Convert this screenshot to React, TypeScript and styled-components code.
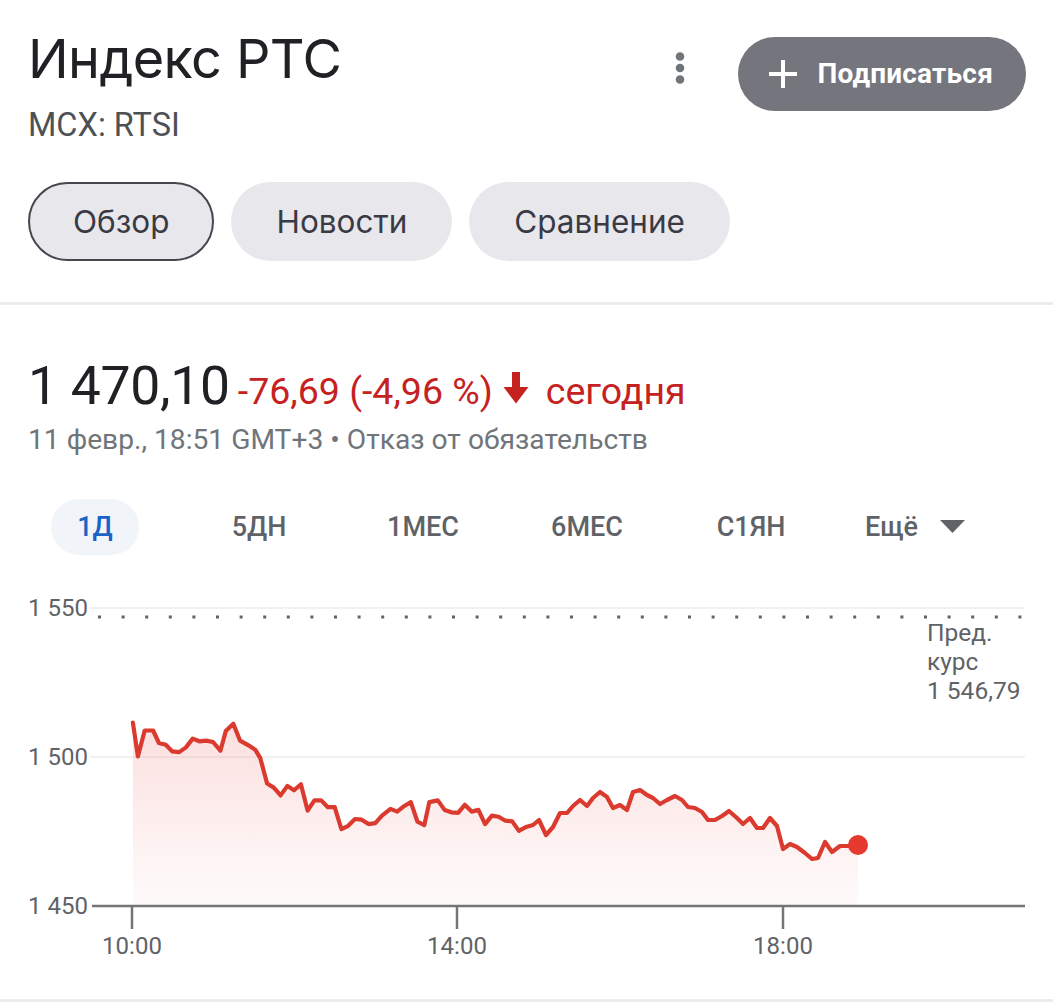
import React from "react";
import styled, { createGlobalStyle } from "styled-components";

const GlobalStyle = createGlobalStyle`
  html, body { margin: 0; padding: 0; background: #ffffff; }
  body { font-family: Roboto, "Liberation Sans", Arial, sans-serif; -webkit-font-smoothing: antialiased; }
  * { box-sizing: border-box; }
`;

const Page = styled.div`
  width: 1053px;
  background: #ffffff;
`;

const Section = styled.div`
  padding: 0 27px 0 28px;
`;

const Header = styled.div`
  display: flex;
  justify-content: space-between;
  align-items: flex-start;
  padding-top: 26.6px;
`;

const TitleBlock = styled.div`
  display: flex;
  flex-direction: column;
`;

const Title = styled.h1`
  margin: 0;
  font-family: Inter, "Noto Sans", sans-serif;
  font-weight: 400;
  font-size: 54px;
  line-height: 63px;
  color: #202124;
  letter-spacing: -0.6px;
`;

const Ticker = styled.div`
  margin-top: 15px;
  font-family: Roboto, sans-serif;
  font-size: 32.5px;
  line-height: 40px;
  color: #4d5156;
`;

const Actions = styled.div`
  display: flex;
  align-items: flex-start;
  gap: 52px;
  margin-top: 10.4px;
`;

const MoreButton = styled.div`
  width: 12px;
  height: 32px;
  margin-top: 15px;
  display: flex;
  align-items: center;
  justify-content: center;
`;

const SubscribeButton = styled.button`
  display: flex;
  align-items: center;
  gap: 19px;
  height: 74px;
  padding: 0 33px 0 30px;
  border: none;
  border-radius: 37px;
  background: #75757d;
  color: #ffffff;
  font-family: Roboto, sans-serif;
  font-weight: 700;
  font-size: 28px;
  letter-spacing: 0.2px;
`;

const ChipRow = styled.div`
  display: flex;
  gap: 17px;
  margin-top: 37px;
`;

const Chip = styled.div<{ $active?: boolean }>`
  height: 79px;
  padding: 0 ${(p) => (p.$active ? 43 : 45)}px;
  display: flex;
  align-items: center;
  border-radius: 40px;
  background: #e8e8ec;
  border: ${(p) => (p.$active ? "2px solid #46464e" : "none")};
  font-family: Inter, "Noto Sans", sans-serif;
  font-size: 31.5px;
  color: #3a3a45;
`;

const Divider = styled.div<{ $mt: number }>`
  margin-top: ${(p) => p.$mt}px;
  height: 3px;
  background: #ececee;
`;

const PriceRow = styled.div`
  display: flex;
  align-items: baseline;
  margin-top: 51px;
  height: 60px;
`;

const Price = styled.span`
  font-size: 53.5px;
  line-height: 60px;
  color: #202124;
  letter-spacing: -0.3px;
`;

const Change = styled.span<{ $ml?: number }>`
  margin-left: ${(p) => p.$ml ?? 0}px;
  font-size: 37.5px;
  color: #c5221f;
  white-space: nowrap;
`;

const ArrowIcon = styled.svg`
  flex: 0 0 auto;
  align-self: center;
  margin: 4px 17px 0 10px;
`;

const DateLine = styled.div`
  margin-top: 6px;
  font-size: 28.2px;
  line-height: 36px;
  color: #70757a;
`;

const PeriodRow = styled.div`
  display: grid;
  grid-template-columns: repeat(6, 164px);
  margin: 41px 0 0 -15px;
  height: 56px;
`;

const PeriodCell = styled.div`
  display: flex;
  align-items: center;
  justify-content: center;
`;

const PeriodTab = styled.div<{ $active?: boolean }>`
  height: 56px;
  width: ${(p) => (p.$active ? "88px" : "auto")};
  display: flex;
  align-items: center;
  justify-content: center;
  gap: 22px;
  border-radius: 28px;
  background: ${(p) => (p.$active ? "#f1f4f9" : "transparent")};
  color: ${(p) => (p.$active ? "#1a62c4" : "#5f6368")};
  font-size: 27px;
  font-weight: 500;
`;

const ChartWrap = styled.div`
  margin-top: 34px;
  height: 410px;
`;

const ChartSvg = styled.svg`
  display: block;
  font-family: Roboto, sans-serif;
`;

const pts: [number, number][] = [
  [132.9, 723.7], [137.9, 757.5], [144.7, 731.5], [153.1, 731.5], [158.9, 744], [165.7, 745.7],
  [172.4, 752.4], [179.2, 753.1], [185.9, 748.4], [192.7, 739.6], [199.5, 742.3], [206.2, 741.6],
  [213, 743], [220.4, 751.7], [225.8, 732.1], [233.3, 724.7], [240, 741.6], [248.5, 746.3],
  [255.2, 750.7], [260.3, 759.2], [267.1, 784.5], [273.8, 788.6], [280.6, 796.4], [287.4, 786.9],
  [294.1, 791.3], [300.9, 785.2], [307.6, 811.6], [314.4, 801.4], [321.2, 801.4], [327.9, 808.2],
  [334.7, 808.2], [341.4, 830.2], [348.2, 826.8], [355, 820], [361.7, 820.7], [368.5, 825.1],
  [375.3, 824.1], [382, 816.6], [390.5, 809.9], [397.2, 812.6], [404, 807.2], [410.8, 803.1],
  [417.5, 822.7], [424.3, 826.1], [429.3, 803.1], [437.8, 801.4], [444.6, 810.9], [451.3, 813.3],
  [458.1, 813.9], [464.8, 805.8], [471.6, 812.6], [478.4, 810.9], [485.1, 825.1], [491.9, 816.6],
  [498.6, 817.7], [505.4, 821.7], [512.2, 822.4], [518.9, 831.9], [526, 828], [533, 826],
  [539, 821], [546, 836], [553, 828], [560, 814], [567, 814], [573, 807], [580, 801], [587, 807],
  [593, 799], [600, 793], [607, 798], [613, 809], [620, 806], [627, 811], [633, 793], [640, 791],
  [647, 796], [653, 799], [660, 805], [667, 801], [675, 797], [682, 801], [688, 808], [695, 809],
  [702, 813], [708, 821], [715, 821], [722, 817], [729, 812], [737, 819], [743, 825], [750, 819],
  [757, 829], [763, 829], [770, 819], [777, 827], [783, 850], [790, 845], [797, 848], [805, 854],
  [812, 860], [818, 859], [825, 843], [832, 853], [840, 847], [848, 847], [858, 846],
];

const Y0 = 590;

function Chart() {
  const p = pts.map(([x, y]) => [x, y - Y0] as [number, number]);
  const line = p.map(([x, y], i) => `${i ? "L" : "M"}${x} ${y}`).join(" ");
  const last = p[p.length - 1];
  const area = `${line} L${last[0]} 317 L${p[0][0]} 317 Z`;
  const axisText = { fontSize: 24, fill: "#5f6368" } as const;
  const ticks = [
    { x: 132, t: "10:00" },
    { x: 457, t: "14:00" },
    { x: 783, t: "18:00" },
  ];
  return (
    <ChartSvg width={1053} height={410} viewBox="0 0 1053 410">
      <defs>
        <linearGradient id="fillGrad" x1="0" y1="0" x2="0" y2="1">
          <stop offset="0%" stopColor="#e53935" stopOpacity="0.16" />
          <stop offset="100%" stopColor="#e53935" stopOpacity="0.02" />
        </linearGradient>
      </defs>
      <line x1={90} x2={1025} y1={19} y2={19} stroke="#f1f1f1" strokeWidth={2} />
      <line x1={90} x2={1025} y1={168} y2={168} stroke="#f1f1f1" strokeWidth={2} />
      <path d={area} fill="url(#fillGrad)" />
      <line x1={98} x2={1025} y1={28} y2={28} stroke="#5f6368" strokeWidth={3} strokeDasharray="3 20.6" />
      <line x1={92} x2={1025} y1={317} y2={317} stroke="#757575" strokeWidth={2.5} />
      {ticks.map((t) => (
        <g key={t.t}>
          <line x1={t.x} x2={t.x} y1={317} y2={340} stroke="#757575" strokeWidth={2.5} />
          <text x={t.x} y={365} textAnchor="middle" {...axisText}>
            {t.t}
          </text>
        </g>
      ))}
      <text x={28} y={27} {...axisText}>1 550</text>
      <text x={28} y={176} {...axisText}>1 500</text>
      <text x={28} y={325} {...axisText}>1 450</text>
      <path d={line} fill="none" stroke="#db3a2e" strokeWidth={4.2} strokeLinejoin="round" strokeLinecap="round" />
      <circle cx={last[0]} cy={last[1]} r={10} fill="#e63a2f" />
      <text x={927} y={52} fontSize={24.5} fill="#5f6368">Пред.</text>
      <text x={927} y={81} fontSize={24.5} fill="#5f6368">курс</text>
      <text x={927} y={110} fontSize={24.5} fill="#5f6368">1 546,79</text>
    </ChartSvg>
  );
}

export default function App() {
  return (
    <Page>
      <GlobalStyle />
      <Section>
        <Header>
          <TitleBlock>
            <Title>Индекс РТС</Title>
            <Ticker>MCX: RTSI</Ticker>
          </TitleBlock>
          <Actions>
            <MoreButton>
              <svg width="10" height="32" viewBox="0 0 10 32">
                <circle cx="5" cy="4.5" r="4.3" fill="#70757a" />
                <circle cx="5" cy="16" r="4.3" fill="#70757a" />
                <circle cx="5" cy="27.5" r="4.3" fill="#70757a" />
              </svg>
            </MoreButton>
            <SubscribeButton>
              <svg width="30" height="30" viewBox="0 0 30 30">
                <path d="M15 1v28M1 15h28" stroke="#ffffff" strokeWidth="4" />
              </svg>
              Подписаться
            </SubscribeButton>
          </Actions>
        </Header>
        <ChipRow>
          <Chip $active>Обзор</Chip>
          <Chip>Новости</Chip>
          <Chip>Сравнение</Chip>
        </ChipRow>
      </Section>
      <Divider $mt={41} />
      <Section>
        <PriceRow>
          <Price>1 470,10</Price>
          <Change $ml={8}>-76,69 (-4,96 %)</Change>
          <ArrowIcon width="26" height="32" viewBox="0 0 26 32">
            <path d="M9 0h8v15h8.5L13 31.5 0.5 15H9z" fill="#c5221f" />
          </ArrowIcon>
          <Change>сегодня</Change>
        </PriceRow>
        <DateLine>11 февр., 18:51 GMT+3 • Отказ от обязательств</DateLine>
        <PeriodRow>
          <PeriodCell><PeriodTab $active>1Д</PeriodTab></PeriodCell>
          <PeriodCell><PeriodTab>5ДН</PeriodTab></PeriodCell>
          <PeriodCell><PeriodTab>1МЕС</PeriodTab></PeriodCell>
          <PeriodCell><PeriodTab>6МЕС</PeriodTab></PeriodCell>
          <PeriodCell><PeriodTab>С1ЯН</PeriodTab></PeriodCell>
          <PeriodCell>
            <PeriodTab>
              Ещё
              <svg width="25" height="13" viewBox="0 0 25 13">
                <path d="M0 0h25L12.5 13z" fill="#5f6368" />
              </svg>
            </PeriodTab>
          </PeriodCell>
        </PeriodRow>
      </Section>
      <ChartWrap>
        <Chart />
      </ChartWrap>
      <Divider $mt={0} />
    </Page>
  );
}
